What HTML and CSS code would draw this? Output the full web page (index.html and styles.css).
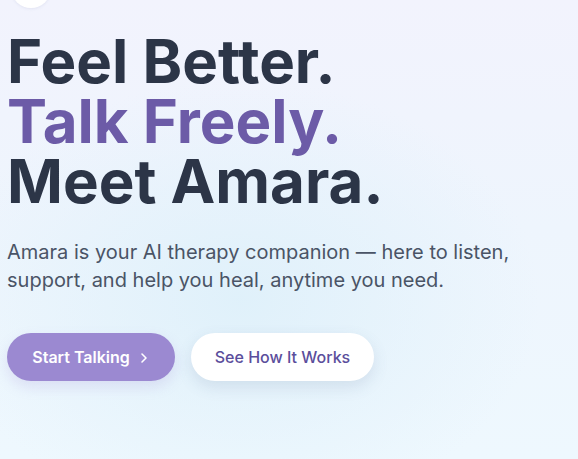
FILE: index.html
```html
<!DOCTYPE html>
<html lang="en">
<head>
<meta charset="utf-8">
<title>Amara</title>
<link rel="stylesheet" href="styles.css">
</head>
<body>
<main class="hero">
  <div class="logo-dot"></div>
  <h1 class="title">
    <span class="line">Feel Better.</span>
    <span class="line accent">Talk Freely.</span>
    <span class="line">Meet Amara.</span>
  </h1>
  <p class="lead">Amara is your AI therapy companion — here to listen, support, and help you heal, anytime you need.</p>
  <div class="actions">
    <a class="btn btn-primary" href="#">Start Talking
      <svg class="chev" width="12" height="12" viewBox="0 0 12 12" aria-hidden="true"><path d="M4 2 L8 6 L4 10" fill="none" stroke="currentColor" stroke-width="1.6" stroke-linecap="round" stroke-linejoin="round"/></svg>
    </a>
    <a class="btn btn-secondary" href="#">See How It Works</a>
  </div>
</main>
</body>
</html>
```

FILE: styles.css
```css
html, body {
  margin: 0;
  padding: 0;
  height: 100%;
}
body {
  font-family: Inter, "Noto Sans", sans-serif;
  background:
    radial-gradient(ellipse 300px 220px at 240px 300px, rgba(222, 240, 250, 0.9), rgba(222, 240, 250, 0) 100%),
    linear-gradient(180deg, #f2f3fd 0%, #eef5fd 50%, #eef8fe 100%);
  overflow: hidden;
}
.hero {
  position: relative;
  padding: 0 7px;
}
.logo-dot {
  position: absolute;
  left: 11px;
  top: -32px;
  width: 40px;
  height: 40px;
  border-radius: 50%;
  background: #ffffff;
  box-shadow: 0 1px 3px rgba(120, 130, 170, 0.12);
}
.title {
  margin: 0;
  padding-top: 31px;
  font-size: 60px;
  line-height: 60px;
  font-weight: 700;
  color: #2c3547;
  letter-spacing: 0;
}
.line {
  display: block;
}
.accent {
  color: #6c5ba7;
}
.lead {
  margin: 27px 0 0;
  font-size: 20px;
  line-height: 28px;
  color: #4a5466;
  max-width: 530px;
}
.actions {
  display: flex;
  gap: 16px;
  margin-top: 39px;
}
.btn {
  display: inline-flex;
  align-items: center;
  justify-content: center;
  height: 48px;
  border-radius: 24px;
  font-size: 16px;
  text-decoration: none;
  box-sizing: border-box;
}
.btn-primary {
  width: 168px;
  background: #9b89d1;
  color: #ffffff;
  font-weight: 600;
  gap: 8px;
  box-shadow: 0 6px 14px rgba(155, 137, 209, 0.2);
}
.chev {
  margin-top: 1px;
}
.btn-secondary {
  width: 183px;
  background: #ffffff;
  color: #5b4e9c;
  font-weight: 500;
  box-shadow: 0 6px 16px rgba(80, 100, 140, 0.14);
}
```
